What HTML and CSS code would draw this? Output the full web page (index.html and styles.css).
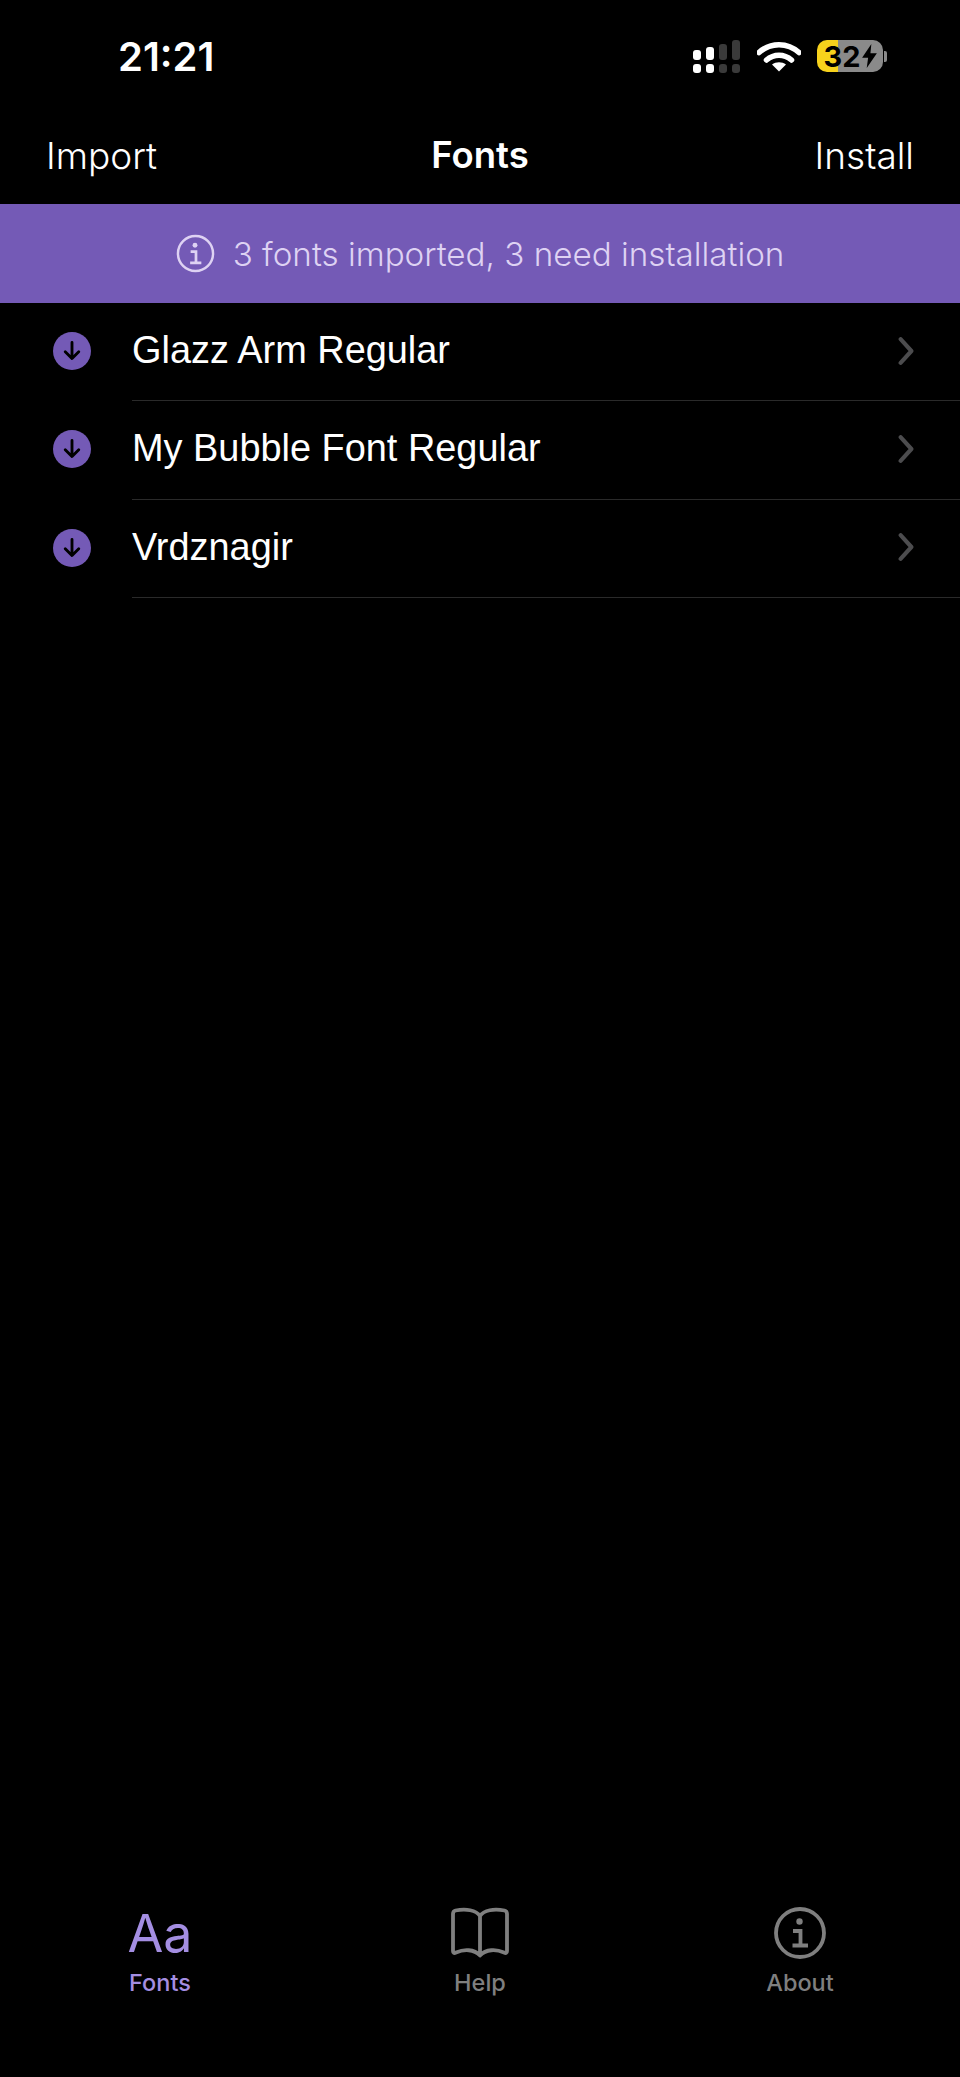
FILE: index.html
```html
<!DOCTYPE html>
<html lang="en">
<head>
    <meta charset="utf-8" />
    <title>Fonts</title>
    <link rel="stylesheet" href="styles.css">
</head>
<body>
    <div class="app">

        <div class="status">
            <span class="time">21:21</span>
            <div class="status-icons">
                <div class="signal">
                    <div class="cell"><i class="bar h10"></i><i class="dot"></i></div>
                    <div class="cell"><i class="bar h13"></i><i class="dot"></i></div>
                    <div class="cell off"><i class="bar h16"></i><i class="dot"></i></div>
                    <div class="cell off"><i class="bar h20"></i><i class="dot"></i></div>
                </div>
                <svg class="wifi" viewBox="0 0 44 31">
                    <path d="M2 11.500C13.500 1 30.500 1 42 11.500M9.500 19C17 12.500 27 12.500 34.500 19" fill="none" stroke="#fff" stroke-width="5.500" stroke-linecap="round" />
                    <path d="M15 23.500C19 20.500 25 20.500 29 23.500L22 30.500Z" fill="#fff" />
                </svg>
                <div class="battery">
                    <span class="level">3</span><span class="level">2</span>
                    <svg class="bolt" viewBox="0 0 16 26"><path d="M10 0L0 15H6.500L5 26L16 10H9Z" fill="#000" /></svg>
                </div>
                <i class="nub"></i>
            </div>
        </div>

        <div class="nav">
            <span>Import</span>
            <span class="title">Fonts</span>
            <span class="right">Install</span>
        </div>

        <div class="banner">
            <svg class="info-small" viewBox="0 0 40 40">
                <circle cx="20" cy="20" r="18" fill="none" stroke="currentColor" stroke-width="2.500" />
                <circle cx="19.500" cy="11.500" r="2.500" fill="currentColor" />
                <path d="M15 18H20.500V29M14.500 29.500H26" fill="none" stroke="currentColor" stroke-width="2.800" />
            </svg>
            <span>3 fonts imported, 3 need installation</span>
        </div>

        <ul class="fonts">
            <li>
                <span class="badge"><svg viewBox="0 0 20 20"><path d="M10 3.500V15.500M4.800 10.500L10 15.800L15.200 10.500" fill="none" stroke="#000" stroke-width="2.200" stroke-linecap="round" stroke-linejoin="round" /></svg></span>
                <div class="row"><span>Glazz Arm Regular</span><svg class="chevron" viewBox="0 0 16 26"><path d="M3 2L13 13L3 24" fill="none" stroke="#4c4c4e" stroke-width="3.800" stroke-linecap="round" stroke-linejoin="round" /></svg></div>
            </li>
            <li>
                <span class="badge"><svg viewBox="0 0 20 20"><path d="M10 3.500V15.500M4.800 10.500L10 15.800L15.200 10.500" fill="none" stroke="#000" stroke-width="2.200" stroke-linecap="round" stroke-linejoin="round" /></svg></span>
                <div class="row"><span>My Bubble Font Regular</span><svg class="chevron" viewBox="0 0 16 26"><path d="M3 2L13 13L3 24" fill="none" stroke="#4c4c4e" stroke-width="3.800" stroke-linecap="round" stroke-linejoin="round" /></svg></div>
            </li>
            <li>
                <span class="badge"><svg viewBox="0 0 20 20"><path d="M10 3.500V15.500M4.800 10.500L10 15.800L15.200 10.500" fill="none" stroke="#000" stroke-width="2.200" stroke-linecap="round" stroke-linejoin="round" /></svg></span>
                <div class="row"><span>Vrdznagir</span><svg class="chevron" viewBox="0 0 16 26"><path d="M3 2L13 13L3 24" fill="none" stroke="#4c4c4e" stroke-width="3.800" stroke-linecap="round" stroke-linejoin="round" /></svg></div>
            </li>
        </ul>

        <div class="tabs">
            <div class="tab active">
                <span class="aa">Aa</span>
                <span class="label">Fonts</span>
            </div>
            <div class="tab">
                <svg class="tab-icon" viewBox="0 0 60 52">
                    <path d="M30 9C26 3 16 1.500 5.500 3.500C3.500 4 3 5 3 7V44C3 46 4 46.500 6 45.500C14 42 24 42 30 48.500C36 42 46 42 54 45.500C56 46.500 57 46 57 44V7C57 5 56.500 4 54.500 3.500C44 1.500 34 3 30 9ZM30 9V48" fill="none" stroke="currentColor" stroke-width="3.800" stroke-linejoin="round" />
                </svg>
                <span class="label">Help</span>
            </div>
            <div class="tab">
                <svg class="tab-icon" viewBox="0 0 60 52">
                    <circle cx="30" cy="26" r="24" fill="none" stroke="currentColor" stroke-width="3.800" />
                    <circle cx="29.500" cy="14.500" r="3.200" fill="currentColor" />
                    <path d="M23 24H30.500V38.500M22.500 38.500H38" fill="none" stroke="currentColor" stroke-width="3.800" />
                </svg>
                <span class="label">About</span>
            </div>
        </div>

    </div>
</body>
</html>
```

FILE: styles.css
```css
html, body {
    margin: 0;
    padding: 0;
    background: #000;
}

.app {
    width: 960px;
    height: 2077px;
    display: flex;
    flex-direction: column;
    color: #fff;
    font-family: Inter, 'Liberation Sans', sans-serif;
    overflow: hidden;
}

/* status bar */
.status {
    height: 114px;
    flex: none;
    display: flex;
    justify-content: space-between;
    align-items: flex-start;
    padding: 0 73px 0 118px;
    box-sizing: border-box;
}

.time {
    font-size: 40px;
    font-weight: 600;
    line-height: 46px;
    margin-top: 34px;
}

.status-icons {
    display: flex;
    align-items: center;
    margin-top: 40px;
    height: 32px;
}

.signal {
    display: flex;
    gap: 5px;
    margin-right: 17px;
}

.cell {
    display: flex;
    flex-direction: column;
    justify-content: flex-end;
    gap: 4px;
    height: 33px;
}

.cell i {
    display: block;
    width: 8px;
    background: #fff;
    border-radius: 3px;
}

.cell.off i {
    background: #3a3a3a;
}

.dot { height: 9px; }
.h10 { height: 10px; }
.h13 { height: 13px; }
.h16 { height: 16px; }
.h20 { height: 20px; }

.wifi {
    width: 44px;
    height: 31px;
    margin-right: 16px;
}

.battery {
    width: 66px;
    height: 32px;
    border-radius: 10px;
    background: linear-gradient(to right, #f7d21c 0, #f7d21c 21px, #8a8a8a 21px);
    display: flex;
    align-items: center;
    justify-content: center;
    color: #000;
    font-size: 29px;
    font-weight: 700;
}

.bolt {
    width: 15px;
    height: 24px;
    margin-left: 1px;
}

.nub {
    display: block;
    width: 3px;
    height: 11px;
    margin-left: 1px;
    background: #8a8a8a;
    border-radius: 0 2px 2px 0;
}

/* navigation bar */
.nav {
    height: 90px;
    flex: none;
    display: grid;
    grid-template-columns: 1fr auto 1fr;
    align-items: center;
    padding: 0 46px 8px;
    font-size: 37px;
    font-weight: 300;
    box-sizing: border-box;
}

.nav .title {
    font-weight: 600;
    font-size: 36.500px;
}

.nav .right {
    text-align: right;
}

/* purple notice */
.banner {
    height: 99px;
    flex: none;
    background: #745ab6;
    color: #ded2f3;
    display: flex;
    justify-content: center;
    align-items: center;
    gap: 18px;
    font-size: 33.200px;
    font-weight: 300;
}

.info-small {
    width: 39px;
    height: 39px;
}

/* font list */
.fonts {
    list-style: none;
    margin: 0;
    padding: 0;
    flex: 1;
}

.fonts li {
    display: flex;
    align-items: stretch;
    height: 98.300px;
}

.badge {
    width: 38px;
    height: 38px;
    flex: none;
    margin: 29px 41px 0 53px;
    border-radius: 50%;
    background: #745ab6;
    display: flex;
    align-items: center;
    justify-content: center;
}

.badge svg {
    width: 26px;
    height: 26px;
}

.row {
    flex: 1;
    display: flex;
    justify-content: space-between;
    align-items: center;
    border-bottom: 1px solid #2a2a2a;
    padding: 0 45px 2px 0;
    font-family: 'Liberation Sans', Arial, sans-serif;
    font-size: 37.900px;
}

.chevron {
    width: 18px;
    height: 28px;
}

/* tab bar */
.tabs {
    height: 175px;
    flex: none;
    display: grid;
    grid-template-columns: 320px 320px 320px;
}

.tab {
    display: flex;
    flex-direction: column;
    align-items: center;
    color: #7f7f7f;
}

.tab.active {
    color: #a48ee2;
}

.aa {
    font-size: 52px;
    line-height: 64px;
    height: 66px;
}

.tab-icon {
    width: 60px;
    height: 52px;
    margin: 5px 0 9px;
}

.label {
    font-size: 23.500px;
    font-weight: 500;
    line-height: 30px;
}
```
